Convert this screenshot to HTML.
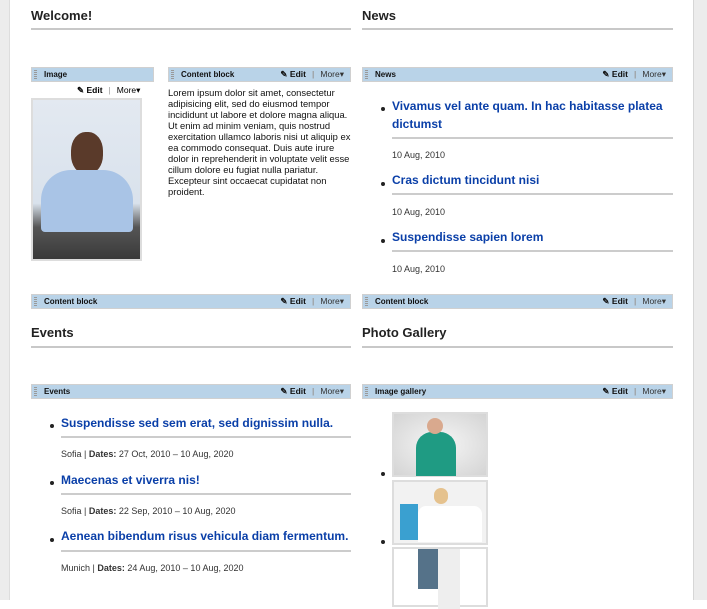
<!DOCTYPE html>
<html><head><style>
*{margin:0;padding:0;box-sizing:border-box}
body{width:707px;height:600px;overflow:hidden;background:#fff;font-family:"Liberation Sans",Arial,sans-serif;position:relative}
.a{position:absolute}
.sideL{left:0;top:0;width:10px;height:600px;background:#ececec;border-right:1px solid #ddd}
.sideR{left:693px;top:0;width:14px;height:600px;background:#ececec;border-left:1px solid #d6d6d6}
h2{position:absolute;font-size:13px;font-weight:bold;color:#222}
.hl{position:absolute;height:2px;background:#c8c8c8}
.bar{position:absolute;height:15px;background:#b9d3e8;border:1px solid #d0d0d0;font-size:8px;font-weight:bold;color:#111;line-height:13px;padding-left:12px}
.bar:before{content:"";position:absolute;left:2px;top:2px;width:3px;height:9px;background:repeating-linear-gradient(#999 0 1px,transparent 1px 2px)}
.tools{position:absolute;right:6px;top:0;font-size:8.5px;line-height:13px}
.tools b{font-weight:bold}
.tools .s{color:#999;margin:0 6px}
.tools .m{font-weight:normal;color:#333}
.d{position:absolute;font-size:9px;color:#333}
.ul{position:absolute;height:2px;background:#ccc}
.dot{position:absolute;width:4px;height:4px;border-radius:2px;background:#222}
.lt{position:absolute;font-size:12px;font-weight:bold;color:#0a3fa8;line-height:18px}
.img{position:absolute;border:1px solid #ccc;background:#f4f4f4}
</style></head><body>
<div class="a sideL"></div><div class="a sideR"></div>

<h2 style="left:31px;top:8px">Welcome!</h2><div class="hl" style="left:31px;top:28px;width:320px"></div>
<h2 style="left:362px;top:8px">News</h2><div class="hl" style="left:362px;top:28px;width:311px"></div>

<div class="bar" style="left:31px;top:67px;width:123px">Image</div>
<div class="a" style="left:77px;top:85px;font-size:8.5px;line-height:10px"><b>✎ Edit</b><span style="color:#999;margin:0 6px">|</span><span>More▾</span></div>
<div class="img" style="left:31px;top:98px;width:111px;height:163px;background:linear-gradient(#e3e9f1,#d9e2ec 65%,#555 80%,#3a3a3a);border:2px solid #ddd">
<div class="a" style="left:38px;top:32px;width:32px;height:42px;border-radius:45%;background:#5a3a2a"></div>
<div class="a" style="left:8px;top:70px;width:92px;height:62px;border-radius:30px 30px 4px 4px;background:#a9c4e6"></div>
</div>

<div class="bar" style="left:168px;top:67px;width:183px">Content block<div class="tools"><b>✎ Edit</b><span class="s">|</span><span class="m">More▾</span></div></div>
<div class="a" style="left:168px;top:87px;width:184px;font-size:9.4px;line-height:11px;color:#111">Lorem ipsum dolor sit amet, consectetur adipisicing elit, sed do eiusmod tempor incididunt ut labore et dolore magna aliqua. Ut enim ad minim veniam, quis nostrud exercitation ullamco laboris nisi ut aliquip ex ea commodo consequat. Duis aute irure dolor in reprehenderit in voluptate velit esse cillum dolore eu fugiat nulla pariatur. Excepteur sint occaecat cupidatat non proident.</div>

<div class="bar" style="left:362px;top:67px;width:311px">News<div class="tools"><b>✎ Edit</b><span class="s">|</span><span class="m">More▾</span></div></div>
<div class="dot" style="left:381px;top:107px"></div>
<div class="lt" style="left:392px;top:97px;width:285px">Vivamus vel ante quam. In hac habitasse platea dictumst</div>
<div class="ul" style="left:392px;top:137px;width:281px"></div>
<div class="d" style="left:392px;top:150px">10 Aug, 2010</div>
<div class="dot" style="left:381px;top:182px"></div>
<div class="lt" style="left:392px;top:171px">Cras dictum tincidunt nisi</div>
<div class="ul" style="left:392px;top:193px;width:281px"></div>
<div class="d" style="left:392px;top:207px">10 Aug, 2010</div>
<div class="dot" style="left:381px;top:239px"></div>
<div class="lt" style="left:392px;top:228px">Suspendisse sapien lorem</div>
<div class="ul" style="left:392px;top:250px;width:281px"></div>
<div class="d" style="left:392px;top:264px">10 Aug, 2010</div>

<div class="bar" style="left:31px;top:294px;width:320px">Content block<div class="tools"><b>✎ Edit</b><span class="s">|</span><span class="m">More▾</span></div></div>
<div class="bar" style="left:362px;top:294px;width:311px">Content block<div class="tools"><b>✎ Edit</b><span class="s">|</span><span class="m">More▾</span></div></div>

<h2 style="left:31px;top:325px">Events</h2><div class="hl" style="left:31px;top:346px;width:320px"></div>
<h2 style="left:362px;top:325px">Photo Gallery</h2><div class="hl" style="left:362px;top:346px;width:311px"></div>

<div class="bar" style="left:31px;top:384px;width:320px">Events<div class="tools"><b>✎ Edit</b><span class="s">|</span><span class="m">More▾</span></div></div>
<div class="dot" style="left:50px;top:424px"></div>
<div class="lt" style="left:61px;top:414px">Suspendisse sed sem erat, sed dignissim nulla.</div>
<div class="ul" style="left:61px;top:436px;width:290px"></div>
<div class="d" style="left:61px;top:449px">Sofia | <b>Dates:</b> 27 Oct, 2010 – 10 Aug, 2020</div>
<div class="dot" style="left:50px;top:481px"></div>
<div class="lt" style="left:61px;top:471px">Maecenas et viverra nis!</div>
<div class="ul" style="left:61px;top:493px;width:290px"></div>
<div class="d" style="left:61px;top:506px">Sofia | <b>Dates:</b> 22 Sep, 2010 – 10 Aug, 2020</div>
<div class="dot" style="left:50px;top:538px"></div>
<div class="lt" style="left:61px;top:527px">Aenean bibendum risus vehicula diam fermentum.</div>
<div class="ul" style="left:61px;top:550px;width:290px"></div>
<div class="d" style="left:61px;top:563px">Munich | <b>Dates:</b> 24 Aug, 2010 – 10 Aug, 2020</div>

<div class="bar" style="left:362px;top:384px;width:311px">Image gallery<div class="tools"><b>✎ Edit</b><span class="s">|</span><span class="m">More▾</span></div></div>
<div class="dot" style="left:381px;top:472px"></div>
<div class="img" style="left:392px;top:412px;width:96px;height:65px;background:radial-gradient(#f6f6f6,#d4d4d4);border:2px solid #ddd">
<div class="a" style="left:22px;top:18px;width:40px;height:44px;border-radius:16px 16px 0 0;background:#1f9b83"></div>
<div class="a" style="left:33px;top:4px;width:16px;height:16px;border-radius:8px;background:#d9a98e"></div></div>
<div class="dot" style="left:381px;top:540px"></div>
<div class="img" style="left:392px;top:480px;width:96px;height:65px;background:#f2f2f2;border:2px solid #ddd">
<div class="a" style="left:6px;top:22px;width:18px;height:36px;background:#3aa0d0"></div>
<div class="a" style="left:24px;top:24px;width:64px;height:36px;background:#fff;border-radius:8px 8px 0 0"></div>
<div class="a" style="left:40px;top:6px;width:14px;height:16px;border-radius:7px;background:#e5c28e"></div></div>
<div class="img" style="left:392px;top:547px;width:96px;height:60px;background:#fff;border:2px solid #ddd">
<div class="a" style="left:24px;top:0;width:22px;height:40px;background:#557289"></div>
<div class="a" style="left:44px;top:0;width:22px;height:60px;background:#eee"></div></div>
</body></html>
